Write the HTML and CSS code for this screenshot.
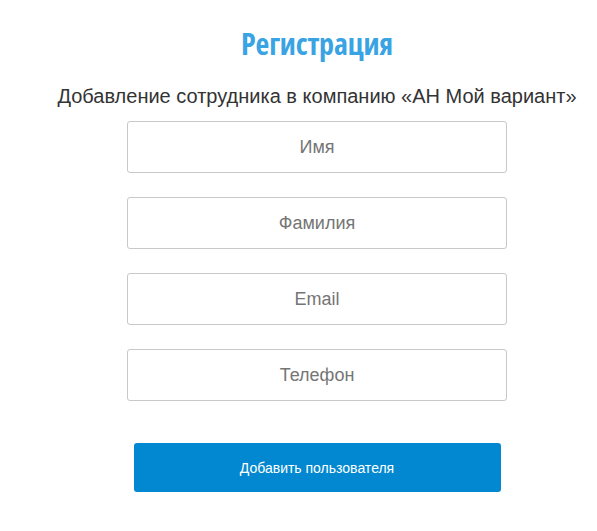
FILE: index.html
```html
<!DOCTYPE html>
<html lang="ru">
<head>
<meta charset="utf-8">
<link rel="stylesheet" href="styles.css">
</head>
<body>
<div class="page">
  <h1 class="title">Регистрация</h1>
  <p class="subtitle">Добавление сотрудника в компанию «АН Мой вариант»</p>
  <form class="form">
    <input class="field" type="text" placeholder="Имя">
    <input class="field" type="text" placeholder="Фамилия">
    <input class="field" type="text" placeholder="Email">
    <input class="field" type="text" placeholder="Телефон">
    <button class="submit" type="button">Добавить пользователя</button>
  </form>
</div>
</body>
</html>
```
FILE: styles.css
```css
html, body { margin: 0; padding: 0; background: #fff; }
body { font-family: "Liberation Sans", Arial, sans-serif; }
.page { padding-left: 37px; display: flex; flex-direction: column; align-items: center; }
.title {
  margin: 25px 0 0;
  font-family: "Open Sans", sans-serif;
  font-weight: 700;
  font-stretch: condensed;
  font-size: 30px;
  line-height: 38px;
  color: #39a3e3;
  letter-spacing: -0.2px;
}
.subtitle {
  margin: 21px 0 0;
  font-size: 20px;
  line-height: 24px;
  color: #333;
}
.form { display: flex; flex-direction: column; align-items: center; margin-top: 13px; }
.field {
  box-sizing: border-box;
  width: 380px;
  height: 52px;
  margin: 0 0 24px;
  border: 1px solid #c8c8c8;
  border-radius: 3px;
  padding: 0 10px;
  font-family: "Liberation Sans", Arial, sans-serif;
  font-size: 18px;
  text-align: center;
  color: #555;
  outline: none;
}
.field::placeholder { color: #757575; }
.submit {
  box-sizing: border-box;
  width: 367px;
  height: 49px;
  margin-top: 18px;
  border: none;
  border-radius: 3px;
  background: #0288d1;
  color: #fff;
  font-family: "Liberation Sans", Arial, sans-serif;
  font-size: 14px;
}
```
